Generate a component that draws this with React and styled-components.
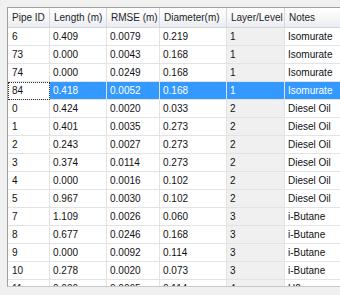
import React from 'react';
import styled, { createGlobalStyle } from 'styled-components';

const GlobalStyle = createGlobalStyle`
  html, body {
    margin: 0;
    padding: 0;
    background: #f0f0f0;
  }
  body {
    font-family: 'Liberation Sans', Arial, sans-serif;
  }
`;

const COLUMNS = '42px 57px 53px 67px 58px 90px';

const Frame = styled.div`
  width: 340px;
  height: 295px;
  padding: 7px 0 0 7px;
  box-sizing: border-box;
  overflow: hidden;
  background: #f0f0f0;
`;

const GridView = styled.div`
  height: 280px;
  border-left: 1px solid #a0a0a0;
  border-top: 1px solid #a0a0a0;
  border-bottom: 1px solid #c8c8c8;
  background: #ffffff;
  overflow: hidden;
  box-sizing: border-box;
`;

const HeaderRow = styled.div`
  display: grid;
  grid-template-columns: ${COLUMNS};
  height: 19px;
  background: linear-gradient(#ffffff 0%, #f6f7f9 50%, #e9ecf1 100%);
  border-bottom: 1px solid #d5d5d5;
`;

const HeaderCell = styled.div`
  font-size: 10px;
  color: #1e1e1e;
  line-height: 19px;
  padding-left: 4px;
  white-space: nowrap;
  overflow: hidden;
  border-right: 1px solid #d5d9df;
`;

const Row = styled.div`
  display: grid;
  grid-template-columns: ${COLUMNS};
  height: 18px;
`;

const Cell = styled.div`
  font-size: 10px;
  line-height: 17px;
  padding-left: ${(p) => (p.$first ? '4px' : '3px')};
  white-space: nowrap;
  overflow: hidden;
  box-sizing: border-box;
  border-right: 1px solid #e3e3e3;
  border-bottom: 1px solid #e3e3e3;
  color: ${(p) => (p.$selected ? '#ffffff' : '#111111')};
  background: ${(p) =>
    p.$selected ? '#3399ff' : p.$readOnly ? '#f0f0f0' : '#ffffff'};
  outline: ${(p) => (p.$focus ? '1px dotted #333' : 'none')};
  outline-offset: -1px;
`;

const headers = ['Pipe ID', 'Length (m)', 'RMSE (m)', 'Diameter(m)', 'Layer/Level', 'Notes'];

const rows = [
  ['6', '0.409', '0.0079', '0.219', '1', 'Isomurate'],
  ['73', '0.000', '0.0043', '0.168', '1', 'Isomurate'],
  ['74', '0.000', '0.0249', '0.168', '1', 'Isomurate'],
  ['84', '0.418', '0.0052', '0.168', '1', 'Isomurate'],
  ['0', '0.424', '0.0020', '0.033', '2', 'Diesel Oil'],
  ['1', '0.401', '0.0035', '0.273', '2', 'Diesel Oil'],
  ['2', '0.243', '0.0027', '0.273', '2', 'Diesel Oil'],
  ['3', '0.374', '0.0114', '0.273', '2', 'Diesel Oil'],
  ['4', '0.000', '0.0016', '0.102', '2', 'Diesel Oil'],
  ['5', '0.967', '0.0030', '0.102', '2', 'Diesel Oil'],
  ['7', '1.109', '0.0026', '0.060', '3', 'i-Butane'],
  ['8', '0.677', '0.0246', '0.168', '3', 'i-Butane'],
  ['9', '0.000', '0.0092', '0.114', '3', 'i-Butane'],
  ['10', '0.278', '0.0020', '0.073', '3', 'i-Butane'],
  ['11', '0.000', '0.0065', '0.114', '4', 'H2'],
];

const SELECTED = 3;

export default function App() {
  return (
    <>
      <GlobalStyle />
      <Frame>
        <GridView>
          <HeaderRow>
            {headers.map((h) => (
              <HeaderCell key={h}>{h}</HeaderCell>
            ))}
          </HeaderRow>
          {rows.map((r, i) => (
            <Row key={i}>
              {r.map((v, j) => (
                <Cell
                  key={j}
                  $first={j === 0}
                  $readOnly={j === 4}
                  $selected={i === SELECTED && j > 0}
                  $focus={i === SELECTED && j === 0}
                >
                  {v}
                </Cell>
              ))}
            </Row>
          ))}
        </GridView>
      </Frame>
    </>
  );
}
